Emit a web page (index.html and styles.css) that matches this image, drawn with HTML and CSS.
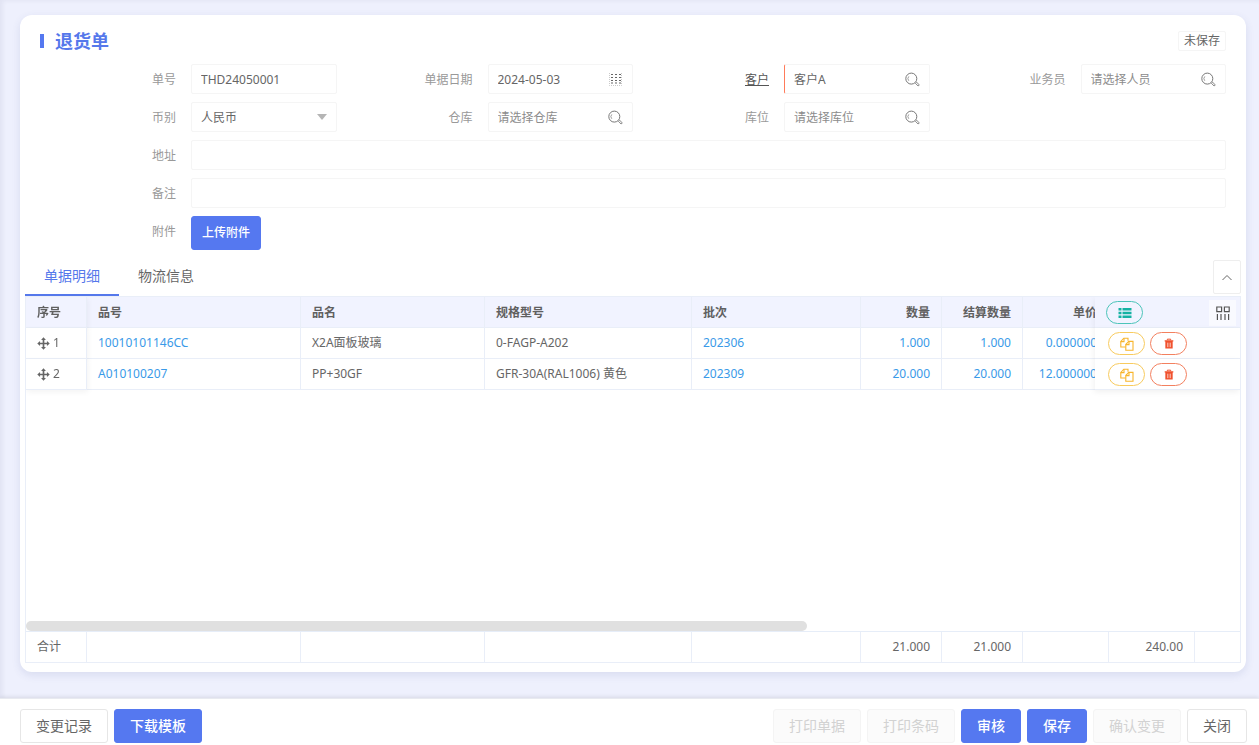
FILE: index.html
```html
<!DOCTYPE html>
<html lang="zh-CN">

<head>
    <title>退货单</title>
    <meta charset="UTF-8">
    <meta name="viewport" content="width=device-width, initial-scale=1.0">
    <link rel="stylesheet" href="styles.css">
</head>

<body>
    <!-- shared icons -->
    <svg class="icon-defs" aria-hidden="true">
        <symbol id="i-search" viewBox="0 0 16 16">
            <g fill="none" stroke="#777" stroke-width="1">
                <circle cx="7.3" cy="7.6" r="5.5" />
                <path d="M4.8 9.8A3.3 3.3 0 0 1 4.8 5.4" stroke-width="0.7" />
                <path d="M11.5 12.4l1.2-1.1 2.6 2.6-1.2 1.1z" stroke-width="0.9" />
            </g>
        </symbol>
        <symbol id="i-date" viewBox="0 0 16 16">
            <path d="M2.5 2v12.5h12V2" fill="none" stroke="#bbb" stroke-width="0.8" stroke-dasharray="1 1" />
            <path d="M4 3.5h2M8 3.5h2M12 3.5h2M4 6.5h2M8 6.5h2M12 6.5h2M4 9.5h2M8 9.5h2M12 9.5h2M4 12h2M8 12h2M12 12h2" stroke="#666" stroke-width="1.2" />
        </symbol>
        <symbol id="i-move" viewBox="0 0 14 14">
            <path d="M7 0.3l2.6 3H7.9v2.8h2.8V4.4l3 2.6-3 2.6V7.9H7.9v2.8h1.7l-2.6 3-2.6-3h1.7V7.9H3.3v1.7L0.3 7l3-2.6v1.7h2.8V3.3H4.4z" fill="#666" />
        </symbol>
        <symbol id="i-copy" viewBox="0 0 14 14">
            <g fill="none" stroke="#f7b52c" stroke-width="1.1">
                <path d="M5.6 10H0.8V4.4L3.8 1.2H8v2.6" />
                <path d="M0.8 4.6h3.2V1.2" />
                <path d="M5.8 7.4l3-3h4.2v8.8H5.8z" />
                <path d="M5.8 7.6h3.2V4.4" />
            </g>
        </symbol>
        <symbol id="i-trash" viewBox="0 0 12 12">
            <path d="M4 2V0.8h4V2" fill="none" stroke="#f0502d" stroke-width="1.2" />
            <path d="M0.8 2h10.4v1.6H0.8zM1.6 3.6h8.8V12H1.6z" fill="#f0502d" />
            <path d="M4.2 5v5.4M6 5v5.4M7.8 5v5.4" stroke="#fff" stroke-width="0.6" />
        </symbol>
    </svg>

    <main class="main">
        <div class="card">
            <div class="card-header">
                <h1 class="title">退货单</h1>
                <span class="status">未保存</span>
            </div>

            <form class="form">
                <div class="item">
                    <label for="billNo">单号</label>
                    <div class="field"><input type="text" id="billNo" value="THD24050001"></div>
                </div>
                <div class="item">
                    <label for="billDate">单据日期</label>
                    <div class="field">
                        <input type="text" id="billDate" value="2024-05-03">
                        <svg class="field-icon"><use href="#i-date" /></svg>
                    </div>
                </div>
                <div class="item">
                    <label for="customer" class="link-label"><span>客户</span></label>
                    <div class="field required">
                        <input type="text" id="customer" value="客户A">
                        <svg class="field-icon"><use href="#i-search" /></svg>
                    </div>
                </div>
                <div class="item">
                    <label for="salesman">业务员</label>
                    <div class="field">
                        <input type="text" id="salesman" placeholder="请选择人员">
                        <svg class="field-icon"><use href="#i-search" /></svg>
                    </div>
                </div>
                <div class="item">
                    <label for="currency">币别</label>
                    <div class="field">
                        <select id="currency">
                            <option>人民币</option>
                        </select>
                        <i class="caret"></i>
                    </div>
                </div>
                <div class="item">
                    <label for="warehouse">仓库</label>
                    <div class="field">
                        <input type="text" id="warehouse" placeholder="请选择仓库">
                        <svg class="field-icon"><use href="#i-search" /></svg>
                    </div>
                </div>
                <div class="item">
                    <label for="location">库位</label>
                    <div class="field">
                        <input type="text" id="location" placeholder="请选择库位">
                        <svg class="field-icon"><use href="#i-search" /></svg>
                    </div>
                </div>
                <div class="item full">
                    <label for="address">地址</label>
                    <div class="field"><input type="text" id="address"></div>
                </div>
                <div class="item full">
                    <label for="remark">备注</label>
                    <div class="field"><input type="text" id="remark"></div>
                </div>
                <div class="item full">
                    <label for="upload">附件</label>
                    <button type="button" id="upload" class="btn btn-primary btn-upload">上传附件</button>
                </div>
            </form>

            <div class="tabs">
                <button type="button" class="tab active">单据明细</button>
                <button type="button" class="tab">物流信息</button>
                <button type="button" class="collapse" aria-label="收起">
                    <svg width="12" height="8" viewBox="0 0 12 8"><path d="M1.5 6l4.5-4.5L10.500 6" fill="none" stroke="#666" stroke-width="1" /></svg>
                </button>
            </div>

            <div class="grid">
                <div class="grid-body">
                    <table>
                        <colgroup>
                            <col class="c-no"><col class="c-code"><col class="c-name"><col class="c-spec"><col class="c-batch">
                            <col class="c-qty"><col class="c-qty"><col class="c-price"><col class="c-price"><col><col class="c-op">
                        </colgroup>
                        <thead>
                            <tr>
                                <th class="fix-left">序号</th>
                                <th>品号</th>
                                <th>品名</th>
                                <th>规格型号</th>
                                <th>批次</th>
                                <th class="num">数量</th>
                                <th class="num">结算数量</th>
                                <th class="num">单价</th>
                                <th></th>
                                <th></th>
                                <th class="fix-right">
                                    <div class="ops ops-head">
                                        <button type="button" class="pill pill-green" aria-label="批量">
                                            <svg width="14" height="12" viewBox="0 0 14 12"><path d="M0.5 1h3v2.6h-3zM4.500 1h9v2.6h-9zM0.5 4.7h3v2.6h-3zM4.500 4.7h9v2.6h-9zM0.5 8.4h3V11h-3zM4.500 8.4h9V11h-9z" fill="#16b2a3" /></svg>
                                        </button>
                                        <button type="button" class="columns" aria-label="列设置">
                                            <svg width="14" height="14" viewBox="0 0 14 14"><g fill="none" stroke="#555" stroke-width="1.2"><path d="M0.8 1h4.8v4.6H0.8zM8.4 1h4.8v4.6H8.4z" /><path d="M1.400 8v6M5 8v6M9 8v6M12.600 8v6" /></g></svg>
                                        </button>
                                    </div>
                                </th>
                            </tr>
                        </thead>
                        <tbody>
                            <tr>
                                <td class="fix-left"><svg class="move"><use href="#i-move" /></svg>1</td>
                                <td class="blue">10010101146CC</td>
                                <td>X2A面板玻璃</td>
                                <td>0-FAGP-A202</td>
                                <td class="blue">202306</td>
                                <td class="num blue">1.000</td>
                                <td class="num blue">1.000</td>
                                <td class="num blue">0.000000</td>
                                <td></td>
                                <td></td>
                                <td class="fix-right">
                                    <div class="ops">
                                        <button type="button" class="pill pill-yellow" aria-label="复制"><svg width="14" height="14"><use href="#i-copy" /></svg></button>
                                        <button type="button" class="pill pill-red" aria-label="删除"><svg width="10" height="11"><use href="#i-trash" /></svg></button>
                                    </div>
                                </td>
                            </tr>
                            <tr>
                                <td class="fix-left"><svg class="move"><use href="#i-move" /></svg>2</td>
                                <td class="blue">A010100207</td>
                                <td>PP+30GF</td>
                                <td>GFR-30A(RAL1006) 黄色</td>
                                <td class="blue">202309</td>
                                <td class="num blue">20.000</td>
                                <td class="num blue">20.000</td>
                                <td class="num blue">12.000000</td>
                                <td></td>
                                <td></td>
                                <td class="fix-right">
                                    <div class="ops">
                                        <button type="button" class="pill pill-yellow" aria-label="复制"><svg width="14" height="14"><use href="#i-copy" /></svg></button>
                                        <button type="button" class="pill pill-red" aria-label="删除"><svg width="10" height="11"><use href="#i-trash" /></svg></button>
                                    </div>
                                </td>
                            </tr>
                        </tbody>
                    </table>
                </div>
                <div class="scrollbar"><div class="thumb"></div></div>
                <div class="grid-total">
                    <table>
                        <colgroup>
                            <col class="c-no"><col class="c-code"><col class="c-name"><col class="c-spec"><col class="c-batch">
                            <col class="c-qty"><col class="c-qty"><col class="c-price"><col class="c-price"><col>
                        </colgroup>
                        <tbody>
                            <tr>
                                <td>合计</td>
                                <td></td>
                                <td></td>
                                <td></td>
                                <td></td>
                                <td class="num">21.000</td>
                                <td class="num">21.000</td>
                                <td></td>
                                <td class="num">240.00</td>
                                <td></td>
                            </tr>
                        </tbody>
                    </table>
                </div>
            </div>
        </div>
    </main>

    <footer class="footer">
        <button type="button" class="btn">变更记录</button>
        <button type="button" class="btn btn-primary">下载模板</button>
        <span class="space"></span>
        <button type="button" class="btn" disabled>打印单据</button>
        <button type="button" class="btn" disabled>打印条码</button>
        <button type="button" class="btn btn-primary">审核</button>
        <button type="button" class="btn btn-primary">保存</button>
        <button type="button" class="btn" disabled>确认变更</button>
        <button type="button" class="btn">关闭</button>
    </footer>
</body>

</html>
```
FILE: styles.css
```css
* {
    box-sizing: border-box;
}

body {
    margin: 0;
    height: 100vh;
    display: flex;
    flex-direction: column;
    background-color: #eef0fd;
    color: #666;
    font-family: "Noto Sans", "Noto Sans CJK SC", sans-serif;
    font-size: 12px;
    line-height: 20px;
    box-shadow: inset 3px 1px 4px rgba(0, 0, 60, 0.05);
}

button,
input,
select {
    font-family: inherit;
    font-size: inherit;
    color: inherit;
}

button {
    cursor: pointer;
}

.icon-defs {
    display: none;
}

.main {
    flex: 1;
    min-height: 0;
    display: flex;
    padding: 15px 13px 26px 20px;
}

.card {
    flex: 1;
    min-width: 0;
    display: flex;
    flex-direction: column;
    padding: 16px 5px 9px;
    background-color: #fff;
    border-radius: 12px;
    box-shadow: 0 3px 8px rgba(60, 70, 140, 0.12);
}

.card-header {
    display: flex;
    justify-content: space-between;
    align-items: flex-start;
    height: 33px;
    padding: 0 15px;
}

.title {
    display: flex;
    align-items: center;
    margin: 0;
    font-size: 18px;
    line-height: 20px;
    color: #5578eb;
}

.title::before {
    content: "";
    width: 4px;
    height: 14px;
    margin-right: 11px;
    background-color: #5578f0;
}

.status {
    padding: 0 5px;
    border: 1px solid #f5f5f5;
    border-radius: 2px;
    line-height: 18px;
}

/* form */
.form {
    display: grid;
    grid-template-columns: repeat(4, 1fr);
    row-gap: 8px;
    padding: 0 15px;
}

.item {
    display: flex;
    min-width: 0;
}

.item.full {
    grid-column: 1 / -1;
}

.item label {
    width: 151px;
    padding-right: 15px;
    line-height: 32px;
    height: 30px;
    text-align: right;
    color: #999;
}

.link-label span {
    color: #555;
    text-decoration: underline;
}

.field {
    flex: 1;
    min-width: 0;
    height: 30px;
    display: flex;
    align-items: center;
    padding: 0 9px;
    border: 1px solid #f5f5f5;
    border-radius: 2px;
}

.field.required {
    border-left-color: #ff7b5a;
}

.field input,
.field select {
    flex: 1;
    min-width: 0;
    height: 28px;
    padding: 0;
    border: 0;
    outline: none;
    background: none;
    appearance: none;
}

.field input::placeholder {
    color: #8c8c8c;
}

.field-icon {
    width: 16px;
    height: 16px;
}

.caret {
    border: 5px solid transparent;
    border-top: 6px solid #b5b5b5;
    border-bottom: 0;
}

/* buttons */
.btn {
    height: 34px;
    padding: 0 15px;
    border: 1px solid #e6e6e6;
    border-radius: 3px;
    background-color: #fff;
    color: #666;
    font-size: 14px;
    line-height: 30px;
}

.btn-primary {
    border-color: #5578f0;
    background-color: #5578f0;
    color: #fff;
    font-weight: 500;
}

.btn:disabled {
    border-color: #f4f4f4;
    background-color: #fbfbfb;
    color: #d2d2d2;
}

.btn-upload {
    padding: 0 10px;
    font-size: 12px;
}

/* tabs */
.tabs {
    display: flex;
    height: 40px;
    margin-top: 6px;
}

.tab {
    padding: 0 19px;
    border: 0;
    border-bottom: 2px solid transparent;
    background: none;
    font-size: 14px;
}

.tab.active {
    color: #5578eb;
    border-bottom-color: #5578eb;
}

.collapse {
    width: 28px;
    height: 34px;
    margin: 4px 0 0 auto;
    padding: 0;
    border: 1px solid #eee;
    border-radius: 2px;
    background-color: #fff;
}

/* detail grid */
.grid {
    flex: 1;
    min-height: 0;
    display: flex;
    flex-direction: column;
    border: 1px solid #e9eef8;
}

.grid-body {
    flex: 1;
    min-height: 0;
    overflow: hidden;
}

.grid-total {
    overflow: hidden;
    border-top: 1px solid #e6edf8;
}

table {
    width: 1890px;
    table-layout: fixed;
    border-collapse: separate;
    border-spacing: 0;
}

.c-no { width: 61px; }
.c-code { width: 214px; }
.c-name { width: 184px; }
.c-spec { width: 207px; }
.c-batch { width: 169px; }
.c-qty { width: 81px; }
.c-price { width: 86px; }
.c-op { width: 145px; }

th,
td {
    height: 31px;
    padding: 0 11px;
    border-right: 1px solid #e9eef8;
    border-bottom: 1px solid #e9eef8;
    text-align: left;
    white-space: nowrap;
    background-color: #fff;
}

th {
    padding-top: 2px;
    background-color: #f1f3ff;
    font-weight: bold;
    color: #606060;
}

.grid-total td {
    height: 30px;
    border-bottom: 0;
}

.num {
    text-align: right;
}

td.blue {
    color: #3a9ae8;
}

.fix-left,
.fix-right {
    position: sticky;
    z-index: 1;
}

.fix-left {
    left: 0;
    box-shadow: 1px 2px 6px rgba(0, 0, 0, 0.05);
}

.fix-right {
    right: 0;
    padding: 0;
    border-right: 0;
    box-shadow: -1px 2px 6px rgba(0, 0, 0, 0.06);
}

.move {
    width: 13px;
    height: 13px;
    margin-right: 3px;
    vertical-align: -3px;
}

.ops {
    display: flex;
    align-items: center;
    gap: 5px;
    padding: 1px 4px 0 13px;
}

.ops-head {
    justify-content: space-between;
    padding-left: 11px;
}

.pill {
    display: flex;
    align-items: center;
    justify-content: center;
    width: 37px;
    height: 23px;
    padding: 0;
    border: 1px solid;
    border-radius: 12px;
    background: none;
}

.pill-green { border-color: #4cc4b9; }
.pill-yellow { border-color: #f8cb5e; }
.pill-red { border-color: #f3805f; }

.columns {
    display: flex;
    align-items: center;
    justify-content: center;
    width: 27px;
    height: 26px;
    padding: 0;
    border: 0;
    background-color: #f9faff;
}

.scrollbar {
    height: 10px;
}

.thumb {
    width: 64.3%;
    height: 10px;
    border-radius: 5px;
    background-color: #e0e0e0;
}

/* bottom bar */
.footer {
    display: flex;
    gap: 6px;
    padding: 10px 12px 2px 20px;
    border-top: 1px solid #e8eaf0;
    background-color: #fff;
    box-shadow: 0 -1px 4px rgba(0, 0, 0, 0.1);
}

.space {
    flex: 1;
}
```
